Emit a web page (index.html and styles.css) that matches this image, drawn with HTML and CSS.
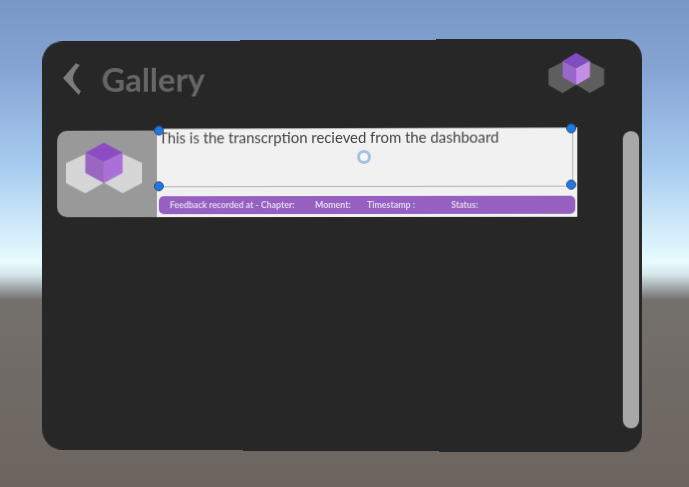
FILE: index.html
```html
<!DOCTYPE html>
<html lang="en">

<head>
	<meta charset="UTF-8">
	<meta name="viewport" content="width=device-width, initial-scale=1.0">
	<title>Gallery</title>
	<link rel="stylesheet" href="styles.css">
</head>

<body>
	<div class="panel">
		<header class="panel-header">
			<div class="title-group">
				<svg class="back-icon" width="18" height="32" viewBox="0 0 18 32">
					<path d="M13 0 L17 2 Q10 10 10 15 Q10 21 18 28 L16 32 L0 15 Z"></path>
				</svg>
				<h1 class="title">Gallery</h1>
			</div>
			<svg class="logo logo-header" width="56" height="40" viewBox="0 0 55 40">
				<path class="hex" d="M0 16 L14 9 L27 16 L27 32 L14 40 L0 32 Z"></path>
				<path class="hex" d="M28 16 L41 9 L55 16 L55 32 L41 40 L28 32 Z"></path>
				<path class="cube-top" d="M27.5 0 L41 8 L27.5 15 L14 8 Z"></path>
				<path class="cube-left" d="M14 8 L27.5 15 L27.5 32 L14 24 Z"></path>
				<path class="cube-right" d="M41 8 L27.5 15 L27.5 32 L41 24 Z"></path>
			</svg>
		</header>

		<div class="panel-body">
			<div class="gallery-list">
				<div class="gallery-item">
					<div class="thumb">
						<svg class="logo logo-thumb" width="77" height="51" viewBox="0 0 55 40" preserveAspectRatio="none">
							<path class="hex" d="M0 16 L14 9 L27 16 L27 32 L14 40 L0 32 Z"></path>
							<path class="hex" d="M28 16 L41 9 L55 16 L55 32 L41 40 L28 32 Z"></path>
							<path class="cube-top" d="M27.5 0 L41 8 L27.5 15 L14 8 Z"></path>
							<path class="cube-left" d="M14 8 L27.5 15 L27.5 32 L14 24 Z"></path>
							<path class="cube-right" d="M41 8 L27.5 15 L27.5 32 L41 24 Z"></path>
						</svg>
					</div>
					<div class="card">
						<div class="transcript">
							This is the transcrption recieved from the dashboard
							<span class="spinner"></span>
							<span class="handle handle-tl"></span>
							<span class="handle handle-tr"></span>
							<span class="handle handle-bl"></span>
							<span class="handle handle-br"></span>
						</div>
						<div class="status-bar">
							<span class="status-chapter">Feedback recorded at - Chapter:</span>
							<span class="status-moment">Moment:</span>
							<span class="status-time">Timestamp :</span>
							<span>Status:</span>
						</div>
					</div>
				</div>
			</div>
			<div class="scrollbar"></div>
		</div>
	</div>
</body>

</html>
```

FILE: styles.css
```css
* {
	margin: 0;
	padding: 0;
	box-sizing: border-box;
	font-family: "Lato", "Open Sans", sans-serif;
}

html,
body {
	height: 487px;
	overflow: hidden;
}

body {
	padding: 40px 49px 36px 40px;
	background: linear-gradient(180deg, #7896c6 0, #85a4d4 70px, #a9cdf0 170px, #e8fbff 262px, #d8e8ec 274px, #8b8f90 293px, #74706c 300px, #6c645f 487px);
}

/* the panel hangs in 3d space, right edge a bit closer */
.panel {
	height: 100%;
	padding: 13px 3px 22px 15px;
	display: flex;
	flex-direction: column;
	background-color: #272727;
	border-radius: 20px;
	transform: perspective(1200px) rotateY(-1.7deg);
}

.panel-header {
	height: 75px;
	padding-right: 34px;
	padding-left: 6px;
	display: flex;
	justify-content: space-between;
	align-items: flex-start;
}

.title-group {
	margin-top: 9px;
	display: flex;
	align-items: center;
	gap: 21px;
}

.back-icon {
	fill: #7c7c7c;
}

.title {
	color: #666666;
	font-size: 33px;
	font-weight: 700;
	line-height: 32px;
}

.logo-header {
	margin-top: 1px;
}

.logo-header .hex {
	fill: #5e5e5e;
}

.logo-header .cube-top {
	fill: #7f4dbf;
}

.logo-header .cube-left {
	fill: #9a68c8;
}

.logo-header .cube-right {
	fill: #c48ee8;
}

.logo-thumb .hex {
	fill: #d6d6d6;
}

.logo-thumb .cube-top {
	fill: #8a4cc0;
}

.logo-thumb .cube-left {
	fill: #9a66c0;
}

.logo-thumb .cube-right {
	fill: #ab70d8;
}

.panel-body {
	flex: 1;
	display: flex;
	align-items: flex-start;
	justify-content: space-between;
}

.gallery-list {
	width: 521px;
}

.gallery-item {
	display: flex;
	align-items: flex-end;
}

.thumb {
	width: 101px;
	height: 87px;
	padding: 12px 0 0 9px;
	background-color: #999999;
	border-radius: 10px 0 0 10px;
}

.card {
	width: 420px;
	height: 89px;
	padding: 0 2px 3px 2px;
	display: flex;
	flex-direction: column;
	justify-content: space-between;
	background-color: #f1f1f1;
}

.transcript {
	position: relative;
	height: 59px;
	margin-right: 2px;
	color: #454545;
	font-size: 14.9px;
	line-height: 17px;
	border: 1px solid #b4b4b4;
	border-width: 1px 1px 1px 0;
}

.spinner {
	position: absolute;
	left: 199px;
	top: 21px;
	width: 14px;
	height: 14px;
	background-color: #f4f6fa;
	border: 3px solid #a9bfe0;
	border-radius: 50%;
}

.handle {
	position: absolute;
	width: 10px;
	height: 10px;
	background-color: #1f78e6;
	border: 1px solid #2b4a70;
	border-radius: 50%;
}

.handle-tl {
	left: -5px;
	top: -4px;
}

.handle-tr {
	right: -4px;
	top: -5px;
}

.handle-bl {
	left: -5px;
	bottom: -5px;
}

.handle-br {
	right: -4px;
	bottom: -4px;
}

.status-bar {
	height: 18px;
	padding: 0 0 2px 11px;
	display: flex;
	align-items: center;
	color: #e4d6f2;
	font-size: 8.8px;
	font-weight: 700;
	background-color: #9560c0;
	border-radius: 5px;
}

.status-chapter {
	width: 146px;
}

.status-moment {
	width: 52px;
}

.status-time {
	width: 84px;
}

.scrollbar {
	width: 16px;
	height: 295px;
	margin-top: 4px;
	background-color: #a8a8a8;
	border-radius: 8px;
}
```
